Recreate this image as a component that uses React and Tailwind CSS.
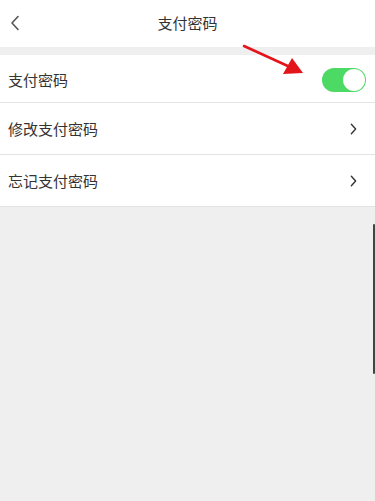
import React, { useState } from "react";

function Chevron({ className }) {
  return (
    <svg viewBox="0 0 8 14" className={className} fill="none" stroke="currentColor" strokeWidth="1.6" strokeLinecap="round" strokeLinejoin="round">
      <path d="M1.5 1.5 L6.5 7 L1.5 12.5" />
    </svg>
  );
}

function Row({ label, children }) {
  return (
    <div className="flex items-center justify-between h-[52px] pl-2 pr-[18px] bg-white border-b border-[#e3e3e3]">
      <span className="text-[15px] text-[#333] pt-[2px]">{label}</span>
      {children}
    </div>
  );
}

export default function App() {
  const [enabled, setEnabled] = useState(true);

  return (
    <div
      className="relative w-[375px] h-[501px] bg-[#efefef] overflow-hidden"
      style={{ fontFamily: '"Noto Sans CJK SC", "Noto Sans", sans-serif' }}
    >
      {/* Header */}
      <div className="relative flex items-center justify-center h-[47px] bg-white">
        <button className="absolute left-[10px] top-[15px] text-[#555]">
          <svg viewBox="0 0 10 16" className="w-[10px] h-[16px]" fill="none" stroke="currentColor" strokeWidth="1.6" strokeLinecap="round" strokeLinejoin="round">
            <path d="M8 1.5 L2 8 L8 14.5" />
          </svg>
        </button>
        <h1 className="text-[15px] text-[#333]">支付密码</h1>
      </div>

      <div className="h-[8px]" />

      <div className="flex flex-col">
        <div className="flex items-center justify-between h-[48px] pl-2 pr-[9px] bg-white border-b border-[#e3e3e3]">
          <span className="text-[15px] text-[#333] pt-1">支付密码</span>
          <button
            onClick={() => setEnabled(!enabled)}
            className={`relative w-[44px] h-[24px] rounded-full mt-[2px] ${enabled ? "bg-[#4cd964]" : "bg-[#e5e5e5]"}`}
          >
            <span
              className={`absolute top-[1px] w-[22px] h-[22px] rounded-full bg-white ${enabled ? "right-[1px]" : "left-[1px]"}`}
            />
          </button>
        </div>
        <Row label="修改支付密码">
          <Chevron className="w-[7px] h-[12px] text-[#333]" />
        </Row>
        <Row label="忘记支付密码">
          <Chevron className="w-[7px] h-[12px] text-[#333]" />
        </Row>
      </div>

      {/* red annotation arrow */}
      <svg className="absolute left-0 top-0 pointer-events-none" width="375" height="120" viewBox="0 0 375 120">
        <line x1="244" y1="46" x2="290" y2="67" stroke="#e4141b" strokeWidth="2.5" strokeLinecap="round" />
        <polygon points="303,73 292,58 283,74" fill="#e4141b" />
      </svg>

      {/* scroll indicator */}
      <div className="absolute left-[373px] top-[224px] w-[2px] h-[150px] bg-[#444] rounded-sm" />
    </div>
  );
}
